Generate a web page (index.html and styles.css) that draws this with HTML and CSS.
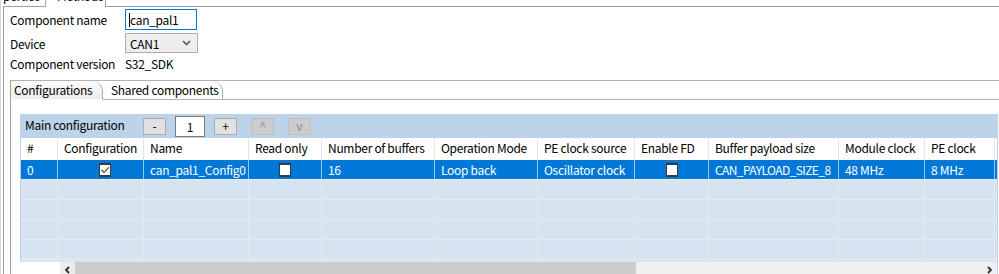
FILE: index.html
```html
<!DOCTYPE html>
<html lang="en">
<head>
<meta charset="UTF-8" />
<meta name="viewport" content="width=device-width, initial-scale=1" />
<title>can_pal1 - Component Inspector</title>
<link rel="stylesheet" href="styles.css">
</head>
<body>

<div class="page">
  <div class="editor-tabs">
    <div class="etab etab-first">perties</div>
    <div class="etab etab-methods">Methods</div>
    <div class="etab-rest"></div>
  </div>

  <div class="editor">
    <div class="form-row row-name">
      <label>Component name</label>
      <div class="text-input"><span class="caret"></span>can_pal1</div>
    </div>
    <div class="form-row row-device">
      <label>Device</label>
      <div class="select">
        <span>CAN1</span>
        <svg width="9" height="6" viewBox="0 0 9 6"><path d="M1 1 L4.5 4.5 L8 1" fill="none" stroke="#444" stroke-width="1.3"/></svg>
      </div>
    </div>
    <div class="form-row row-version">
      <label>Component version</label>
      <span>S32_SDK</span>
    </div>

    <div class="folder">
      <div class="folder-tabs">
        <div class="ftab ftab-active">Configurations</div>
        <div class="ftab ftab-shared">Shared components</div>
        <div class="ftab-rest"></div>
      </div>

      <div class="folder-body">
        <div class="grid">
          <div class="grid-bar">
            <span class="bar-title">Main configuration</span>
            <button class="btn btn-minus">-</button>
            <div class="count">1</div>
            <button class="btn">+</button>
            <button class="btn btn-off">^</button>
            <button class="btn btn-off">v</button>
          </div>

          <div class="grid-rows">
            <div class="grid-row grid-head">
              <div class="cell">#</div>
              <div class="cell">Configuration</div>
              <div class="cell">Name</div>
              <div class="cell">Read only</div>
              <div class="cell">Number of buffers</div>
              <div class="cell">Operation Mode</div>
              <div class="cell">PE clock source</div>
              <div class="cell">Enable FD</div>
              <div class="cell">Buffer payload size</div>
              <div class="cell">Module clock</div>
              <div class="cell">PE clock</div>
            </div>

            <div class="grid-row grid-selected">
              <div class="cell">0</div>
              <div class="cell cell-check cell-config">
                <svg width="12" height="14" viewBox="0 0 12 14"><rect x="0.5" y="0.5" width="11" height="13" fill="#fff" stroke="#3a3a3a"/><rect x="0" y="0" width="12" height="2" fill="#3a3a3a"/><rect x="0" y="12" width="12" height="2" fill="#3a3a3a"/><path d="M2.5 7 L5 9.5 L9.8 4.3" fill="none" stroke="#3a3a3a" stroke-width="1.1"/></svg>
              </div>
              <div class="cell">can_pal1_Config0</div>
              <div class="cell cell-check">
                <svg width="12" height="14" viewBox="0 0 12 14"><rect x="0.5" y="0.5" width="11" height="13" fill="#fff" stroke="#3a3a3a"/><rect x="0" y="0" width="12" height="2" fill="#3a3a3a"/><rect x="0" y="12" width="12" height="2" fill="#3a3a3a"/></svg>
              </div>
              <div class="cell">16</div>
              <div class="cell">Loop back</div>
              <div class="cell">Oscillator clock</div>
              <div class="cell cell-check">
                <svg width="12" height="14" viewBox="0 0 12 14"><rect x="0.5" y="0.5" width="11" height="13" fill="#fff" stroke="#3a3a3a"/><rect x="0" y="0" width="12" height="2" fill="#3a3a3a"/><rect x="0" y="12" width="12" height="2" fill="#3a3a3a"/></svg>
              </div>
              <div class="cell cell-tight">CAN_PAYLOAD_SIZE_8</div>
              <div class="cell">48 MHz</div>
              <div class="cell">8 MHz</div>
            </div>

            <div class="grid-row grid-empty"><div class="cell"></div><div class="cell"></div><div class="cell"></div><div class="cell"></div><div class="cell"></div><div class="cell"></div><div class="cell"></div><div class="cell"></div><div class="cell"></div><div class="cell"></div><div class="cell"></div></div>
            <div class="grid-row grid-empty"><div class="cell"></div><div class="cell"></div><div class="cell"></div><div class="cell"></div><div class="cell"></div><div class="cell"></div><div class="cell"></div><div class="cell"></div><div class="cell"></div><div class="cell"></div><div class="cell"></div></div>
            <div class="grid-row grid-empty"><div class="cell"></div><div class="cell"></div><div class="cell"></div><div class="cell"></div><div class="cell"></div><div class="cell"></div><div class="cell"></div><div class="cell"></div><div class="cell"></div><div class="cell"></div><div class="cell"></div></div>
            <div class="grid-row grid-empty"><div class="cell"></div><div class="cell"></div><div class="cell"></div><div class="cell"></div><div class="cell"></div><div class="cell"></div><div class="cell"></div><div class="cell"></div><div class="cell"></div><div class="cell"></div><div class="cell"></div></div>
            <div class="grid-row grid-empty"><div class="cell"></div><div class="cell"></div><div class="cell"></div><div class="cell"></div><div class="cell"></div><div class="cell"></div><div class="cell"></div><div class="cell"></div><div class="cell"></div><div class="cell"></div><div class="cell"></div></div>
          </div>

          <div class="hscroll">
            <div class="hscroll-gap"></div>
            <div class="hscroll-arrow">
              <svg width="7" height="8" viewBox="0 0 7 8"><path d="M5 1 L2 4 L5 7" fill="none" stroke="#333" stroke-width="1.8"/></svg>
            </div>
            <div class="hscroll-thumb"></div>
            <div class="hscroll-track">
              <svg width="7" height="8" viewBox="0 0 7 8"><path d="M2 1 L5 4 L2 7" fill="none" stroke="#333" stroke-width="1.8"/></svg>
            </div>
          </div>
        </div>
      </div>
    </div>
  </div>
</div>

</body>
</html>
```

FILE: styles.css
```css
body {
  margin: 0;
  width: 999px;
  height: 274px;
  overflow: hidden;
  background: #fff;
  font-family: "Noto Sans CJK SC", "Noto Sans", sans-serif;
  font-size: 12px;
  letter-spacing: -0.3px;
  color: #000;
}
.page {
  height: 274px;
  border-left: 1px solid #dadada;
  padding-left: 2px;
}

/* editor tabs, cut off at the top of the window */
.editor-tabs {
  display: flex;
  height: 7px;
  overflow: hidden;
}
.etab {
  height: 19px;
  margin-top: -12px;
  line-height: 16px;
  box-sizing: border-box;
  white-space: nowrap;
}
.etab-first {
  width: 42px;
  padding-right: 9px;
  text-align: right;
  border-bottom: 1px solid #9f9f9f;
}
.etab-methods {
  width: 61px;
  padding-left: 11px;
  border-left: 1px solid #9f9f9f;
  border-right: 1px solid #9f9f9f;
  border-top-left-radius: 16px;
}
.etab-rest {
  flex: 1;
  border-bottom: 1px solid #9f9f9f;
}

.editor {
  border-left: 1px solid #9f9f9f;
  height: 267px;
  padding: 2px 0 0 6px;
}

.form-row {
  display: flex;
  align-items: center;
}
.form-row label {
  width: 115px;
}
.row-name {
  height: 21px;
}
.text-input {
  width: 72px;
  height: 21px;
  box-sizing: border-box;
  border: 1px solid #0078d7;
  padding-left: 3px;
  display: flex;
  align-items: center;
}
.caret {
  width: 1px;
  height: 14px;
  background: #000;
}
.row-device {
  height: 20px;
  margin-top: 3px;
}
.select {
  width: 73px;
  height: 20px;
  box-sizing: border-box;
  border: 1px solid #adadad;
  background: #eeeeee;
  display: flex;
  align-items: center;
  justify-content: space-between;
  padding: 0 6px 0 4px;
}
.row-version {
  height: 19px;
  margin-top: 1px;
}

/* inner tab folder */
.folder {
  margin-top: 7px;
  border-left: 1px solid #a0a0a0;
  height: 200px;
}
.folder-tabs {
  display: flex;
  height: 19px;
  border-top: 1px solid #b3b3b3;
}
.ftab {
  line-height: 18px;
  border-right: 1px solid #a8a8a8;
  border-bottom: 1px solid #b3b3b3;
  border-top-right-radius: 10px;
  box-sizing: border-box;
  white-space: nowrap;
}
.ftab-active {
  width: 92px;
  padding-left: 3px;
  background: linear-gradient(#fbfbfb, #ececec);
  border-bottom-color: transparent;
}
.ftab-shared {
  width: 120px;
  padding-left: 8px;
}
.ftab-rest {
  flex: 1;
  border-bottom: 1px solid #b3b3b3;
}
.folder-body {
  padding: 14px 0 0 9px;
}

/* configuration grid */
.grid {
  width: 976px;
  border-left: 1px solid #bcd2ea;
  border-right: 1px solid #bcd2ea;
}
.grid-bar {
  height: 24px;
  background: #bcd3ea;
  display: flex;
  align-items: center;
  padding-left: 4px;
}
.bar-title {
  width: 118px;
  margin-top: -3px;
}
.btn {
  width: 23px;
  height: 17px;
  padding: 0;
  margin-right: 14px;
  border: 1px solid #adadad;
  background: #e1e1e1;
  font-family: inherit;
  font-size: 12px;
  line-height: 14px;
  color: #000;
}
.btn-minus {
  margin-right: 9px;
}
.count {
  width: 30px;
  height: 21px;
  box-sizing: border-box;
  border: 1px solid #7a7a7a;
  background: #fff;
  text-align: center;
  line-height: 19px;
  margin-right: 9px;
}
.btn-off {
  background: #cccccc;
  border-color: #bfbfbf;
  color: #8a8a8a;
}

.grid-rows {
  height: 124px;
  overflow: hidden;
}
.grid-row {
  display: grid;
  grid-template-columns: 37px 86px 105px 73px 113px 103px 97px 74px 130px 86px 70px;
  height: 19px;
}
.cell {
  box-sizing: border-box;
  border-right: 1px solid #e3e6ea;
  padding-left: 6px;
  line-height: 19px;
  white-space: nowrap;
  overflow: hidden;
}
.cell-tight {
  letter-spacing: -0.6px;
}
.grid-head {
  height: 22px;
  background: #fff;
}
.grid-head .cell {
  line-height: 20px;
}
.grid-selected {
  background: #0078d7;
  color: #fff;
}
.grid-selected .cell {
  border-right-color: #9cc6ea;
}
.cell-check {
  display: flex;
  justify-content: center;
  align-items: center;
  padding: 0;
}
.cell-config {
  padding-left: 9px;
}
.grid-empty {
  background: #d6e3f1;
  border-top: 1px solid #e6e9ed;
  height: 20px;
  box-sizing: border-box;
}
.grid-empty .cell {
  border-right-color: #e6e9ed;
}

.hscroll {
  display: flex;
  height: 17px;
  margin-left: -1px;
  background: #fff;
}
.hscroll-gap {
  width: 40px;
}
.hscroll-arrow {
  width: 15px;
  background: #ececec;
  display: flex;
  justify-content: center;
  padding-top: 4px;
  box-sizing: border-box;
}
.hscroll-thumb {
  width: 561px;
  background: #cdcdcd;
}
.hscroll-track {
  flex: 1;
  background: #f0f0f0;
  display: flex;
  justify-content: flex-end;
  padding: 4px 4px 0 0;
  box-sizing: border-box;
}
```
